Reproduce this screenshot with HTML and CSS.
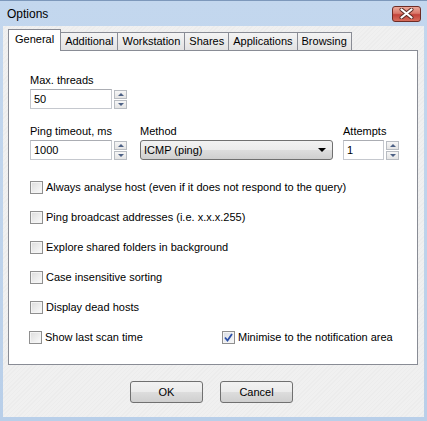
FILE: index.html
```html
<!DOCTYPE html>
<html lang="en">
<head>
    <meta charset="UTF-8">
    <title>Options</title>
    <link rel="stylesheet" href="styles.css">
</head>
<body>
    <div class="window">
        <div class="titlebar">
            <span class="title">Options</span>
            <div class="close">
                <svg width="15" height="11" viewBox="0 0 15 11">
                    <path d="M2.5 1.5 L12.5 9.5 M12.5 1.5 L2.5 9.5" stroke="#5a2a24" stroke-width="4" stroke-linecap="round"/>
                    <path d="M2.5 1.5 L12.5 9.5 M12.5 1.5 L2.5 9.5" stroke="#ffffff" stroke-width="2.2" stroke-linecap="round"/>
                </svg>
            </div>
        </div>

        <div class="client">
            <div class="tabs">
                <div class="tab active">General</div>
                <div class="tab">Additional</div>
                <div class="tab">Workstation</div>
                <div class="tab">Shares</div>
                <div class="tab">Applications</div>
                <div class="tab">Browsing</div>
            </div>

            <div class="panel">
                <div class="field">
                    <div class="label">Max. threads</div>
                    <div class="spin-row">
                        <div class="edit edit-wide">50</div>
                        <div class="spin">
                            <div class="spin-btn"><span class="arrow-up"></span></div>
                            <div class="spin-btn"><span class="arrow-down"></span></div>
                        </div>
                    </div>
                </div>

                <div class="field-row">
                    <div class="field field-ping">
                        <div class="label">Ping timeout, ms</div>
                        <div class="spin-row">
                            <div class="edit edit-wide">1000</div>
                            <div class="spin">
                                <div class="spin-btn"><span class="arrow-up"></span></div>
                                <div class="spin-btn"><span class="arrow-down"></span></div>
                            </div>
                        </div>
                    </div>
                    <div class="field field-method">
                        <div class="label">Method</div>
                        <div class="combo">
                            <span>ICMP (ping)</span>
                            <span class="combo-arrow"></span>
                        </div>
                    </div>
                    <div class="field">
                        <div class="label">Attempts</div>
                        <div class="spin-row">
                            <div class="edit edit-small">1</div>
                            <div class="spin">
                                <div class="spin-btn"><span class="arrow-up"></span></div>
                                <div class="spin-btn"><span class="arrow-down"></span></div>
                            </div>
                        </div>
                    </div>
                </div>

                <div class="checks">
                    <div class="check"><span class="box"></span>Always analyse host (even if it does not respond to the query)</div>
                    <div class="check"><span class="box"></span>Ping broadcast addresses (i.e. x.x.x.255)</div>
                    <div class="check"><span class="box"></span>Explore shared folders in background</div>
                    <div class="check"><span class="box"></span>Case insensitive sorting</div>
                    <div class="check"><span class="box"></span>Display dead hosts</div>
                    <div class="check-row">
                        <div class="check check-first"><span class="box"></span>Show last scan time</div>
                        <div class="check">
                            <span class="box checked">
                                <svg width="9" height="9" viewBox="0 0 9 9">
                                    <path d="M1 4.5 L3.5 7.5 L8 1" fill="none" stroke="#2b4fa8" stroke-width="1.8"/>
                                </svg>
                            </span>Minimise to the notification area
                        </div>
                    </div>
                </div>
            </div>

            <div class="buttons">
                <div class="button">OK</div>
                <div class="button">Cancel</div>
            </div>
        </div>
    </div>
</body>
</html>
```

FILE: styles.css
```css
body {
    margin: 0;
    font-family: "Liberation Sans", Arial, sans-serif;
    font-size: 11px;
    color: #000;
}
.window {
    width: 427px;
    height: 421px;
    box-sizing: border-box;
    padding: 0 3px 4px 3px;
    background: linear-gradient(#c3d7ee, #b9cfe9);
    border-top: 1px solid #7d98bb;
    display: flex;
    flex-direction: column;
}
.titlebar {
    flex-shrink: 0;
    height: 25px;
    display: flex;
    align-items: center;
    justify-content: space-between;
    padding-left: 4px;
}
.title {
    font-size: 12px;
}
.close {
    width: 27px;
    height: 14px;
    margin-top: 0;
    margin-right: 3px;
    border: 1px solid #6e2c25;
    border-radius: 3px;
    background: linear-gradient(#eba89a 0%, #d9786a 45%, #c2433a 55%, #d76d5c 100%);
    display: flex;
    align-items: center;
    justify-content: center;
}
.client {
    flex: 1;
    background: repeating-linear-gradient(135deg, #f0f0f0 0 2px, #ececec 2px 3px);
    padding: 4px 6px 0 5px;
    display: flex;
    flex-direction: column;
}
.tabs {
    display: flex;
    align-items: flex-end;
    margin-bottom: -1px;
    height: 21px;
}
.tab {
    height: 17px;
    line-height: 17px;
    padding: 0 4px;
    border: 1px solid #898c95;
    border-bottom: none;
    border-left: none;
    margin-bottom: 1px;
    background: linear-gradient(#f4f4f4, #e2e2e2);
}
.tab.active {
    height: 21px;
    line-height: 19px;
    padding: 0 6px;
    border-left: 1px solid #898c95;
    margin-bottom: 0;
    background: #fff;
    position: relative;
}
.panel {
    height: 315px;
    box-sizing: border-box;
    background: #fff;
    border: 1px solid #898c95;
    padding: 23px 0 0 21px;
}
.label {
    height: 13px;
    line-height: 13px;
    margin-bottom: 2px;
}
.spin-row {
    display: flex;
    align-items: center;
    gap: 2px;
}
.edit {
    height: 18px;
    line-height: 18px;
    padding-left: 3px;
    background: #fff;
    border: 1px solid #c5c8ce;
    border-top-color: #abadb3;
}
.edit-wide {
    width: 77px;
}
.edit-small {
    width: 36px;
}
.spin {
    display: flex;
    flex-direction: column;
    gap: 1px;
}
.spin-btn {
    width: 11px;
    height: 7px;
    border: 1px solid #b8bcc2;
    background: linear-gradient(#f6f6f6, #e4e4e4);
    display: flex;
    align-items: center;
    justify-content: center;
}
.arrow-up {
    border-left: 3px solid transparent;
    border-right: 3px solid transparent;
    border-bottom: 3px solid #4d6185;
}
.arrow-down {
    border-left: 3px solid transparent;
    border-right: 3px solid transparent;
    border-top: 3px solid #4d6185;
}
.field-row {
    display: flex;
    margin-top: 16px;
}
.field-ping {
    width: 110px;
}
.field-method {
    width: 203px;
}
.combo {
    width: 182px;
    height: 18px;
    padding: 0 6px 0 3px;
    border: 1px solid #707070;
    border-radius: 3px;
    background: linear-gradient(#f2f2f2 0%, #ebebeb 50%, #dddddd 51%, #cfcfcf 100%);
    display: flex;
    align-items: center;
    justify-content: space-between;
}
.combo-arrow {
    border-left: 4px solid transparent;
    border-right: 4px solid transparent;
    border-top: 4px solid #000;
}
.checks {
    margin-top: 21px;
    display: flex;
    flex-direction: column;
    gap: 17px;
}
.check {
    height: 13px;
    line-height: 13px;
    display: flex;
    align-items: center;
    gap: 3px;
}
.check-row {
    display: flex;
    margin-left: -1px;
}
.check-first {
    width: 193px;
}
.box {
    width: 11px;
    height: 11px;
    border: 1px solid #8f8f8f;
    background: linear-gradient(135deg, #dcdcdc, #fbfbfb);
    box-shadow: inset 0 0 0 1px #f4f4f4;
    display: flex;
    align-items: center;
    justify-content: center;
}
.box.checked {
    background: linear-gradient(135deg, #d8dce4, #f8f8f8);
}
.buttons {
    display: flex;
    justify-content: center;
    gap: 17px;
    margin-top: 16px;
    padding-right: 3px;
}
.button {
    width: 71px;
    height: 20px;
    line-height: 20px;
    text-align: center;
    border: 1px solid #707070;
    border-radius: 3px;
    background: linear-gradient(#f2f2f2 0%, #ebebeb 50%, #dddddd 51%, #cfcfcf 100%);
}
```
